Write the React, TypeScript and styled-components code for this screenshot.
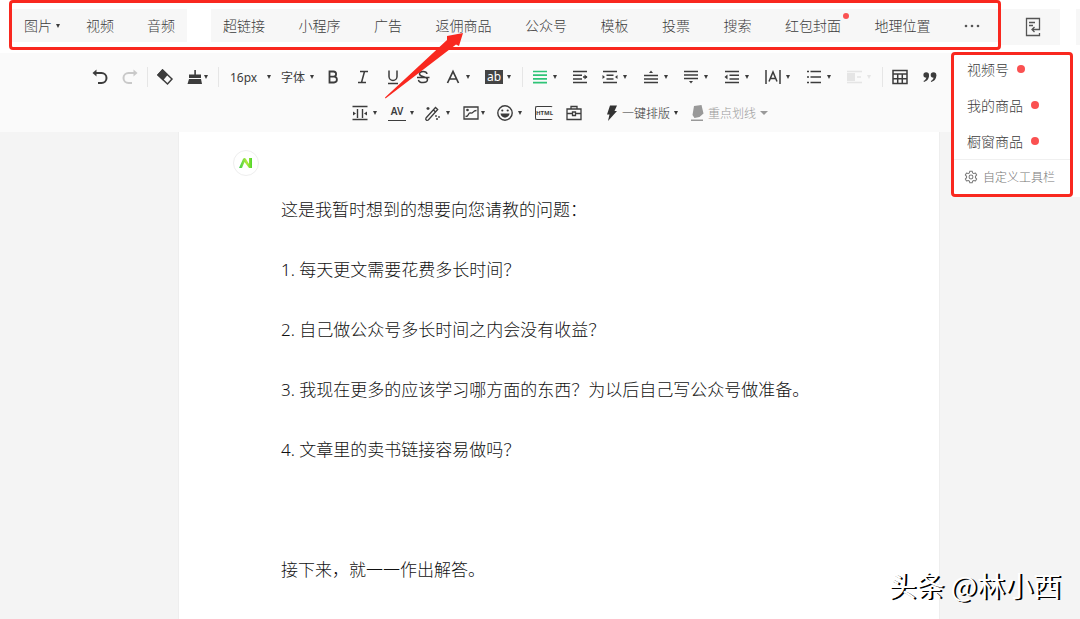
import React from "react";
import styled, { createGlobalStyle, css } from "styled-components";

const Global = createGlobalStyle`
  * { box-sizing: border-box; }
  body {
    margin: 0;
    background: #f4f4f4;
    color: #3c3c3c;
    font-family: "Noto Sans", "Noto Sans CJK SC", sans-serif;
    font-size: 14px;
    font-weight: 300;
  }
  button, select { font: inherit; color: inherit; background: none; border: 0; padding: 0; margin: 0; cursor: pointer; }
  svg { display: block; flex: none; }
`;

const RED = "#f9281f";

const Page = styled.div`
  position: relative;
  min-height: 100vh;
  display: flex;
  flex-direction: column;
`;

const Header = styled.header`
  display: flex;
  background: #fff;
  padding-left: 9px;
  height: 53px;
`;

const Marked = styled.div`
  flex: 1;
  display: flex;
  gap: 24px;
  height: 50px;
  padding: 6px 0 5px;
  border: 3px solid ${RED};
  border-radius: 4px;
`;

const Group = styled.nav<{ $grow?: boolean }>`
  display: flex;
  align-items: center;
  background: #f7f7f7;
  ${(p) =>
    p.$grow
      ? css`flex: 1; justify-content: space-between; padding: 0 18px 0 12px;`
      : css`gap: 33px; padding: 0 12px;`}
`;

const Insert = styled.button<{ $drop?: boolean }>`
  position: relative;
  display: flex;
  align-items: center;
  gap: 4px;
  margin-right: ${(p) => (p.$drop ? -7 : 0)}px;
  white-space: nowrap;
  line-height: 20px;
`;

const Badge = styled.span`
  position: absolute;
  top: -3px;
  right: -8px;
  width: 6px;
  height: 6px;
  border-radius: 50%;
  background: #fa5151;
`;

const Side = styled.div`
  display: flex;
  gap: 16px;
  padding-top: 9px;
`;

const SideButton = styled.button<{ $stub?: boolean }>`
  display: flex;
  align-items: center;
  justify-content: center;
  width: ${(p) => (p.$stub ? 4 : 59)}px;
  height: 36px;
  padding-left: ${(p) => (p.$stub ? 0 : 4)}px;
  background: #f7f7f7;
`;

const Toolbar = styled.div`
  background: #fafafa;
  padding: 6px 0 1px;
`;

const Row = styled.div<{ $indent: number }>`
  display: flex;
  align-items: center;
  height: 36px;
  padding-left: ${(p) => p.$indent}px;
  font-size: 12px;
`;

const Tool = styled.button<{ $w?: number; $gap?: number; $faint?: number }>`
  display: flex;
  align-items: center;
  gap: ${(p) => p.$gap ?? 4}px;
  width: ${(p) => p.$w ?? 30}px;
  height: 30px;
  padding-left: 6px;
  flex: none;
  white-space: nowrap;
  opacity: ${(p) => p.$faint ?? 1};
`;

const TextTool = styled.button<{ $muted?: boolean }>`
  display: flex;
  align-items: center;
  gap: 4px;
  height: 30px;
  padding-left: ${(p) => (p.$muted ? 11 : 14)}px;
  white-space: nowrap;
  color: ${(p) => (p.$muted ? "#999" : "#333")};
`;

const Label = styled.span`
  margin-left: -3px;
`;

const Picker = styled.label<{ $w: number; $pad: number }>`
  display: flex;
  align-items: center;
  justify-content: space-between;
  width: ${(p) => p.$w}px;
  padding: 0 4px 0 ${(p) => p.$pad}px;
  font-weight: 400;
  select { appearance: none; outline: 0; }
`;

const Sep = styled.i`
  width: 1px;
  height: 20px;
  margin: 0 2px;
  background: #e6e6e6;
`;

const CaretMark = styled.i<{ $wide?: boolean }>`
  width: 0;
  height: 0;
  flex: none;
  border: ${(p) => (p.$wide ? 4 : 2)}px solid transparent;
  border-top: 4px solid currentColor;
  border-bottom: 0;
`;

const More = styled.div`
  position: absolute;
  top: 52px;
  right: 0;
  padding-right: 7px;
  background: #fff;
`;

const MoreBox = styled.div`
  width: 122px;
  border: 3px solid ${RED};
  border-radius: 4px;
`;

const MoreList = styled.div`
  display: flex;
  flex-direction: column;
  gap: 8px;
  padding: 0 0 4px 13px;
`;

const MoreItem = styled.button`
  display: flex;
  align-items: center;
  gap: 8px;
  height: 28px;
`;

const Dot = styled.span`
  width: 8px;
  height: 8px;
  border-radius: 50%;
  background: #fa5151;
`;

const Customize = styled.button`
  display: flex;
  align-items: center;
  gap: 5px;
  width: 100%;
  height: 35px;
  padding-left: 10px;
  border-top: 1px solid #f0f0f0;
  font-size: 12px;
  color: #777;
`;

const Paper = styled.main`
  flex: 1;
  margin: 0 140px 0 178px;
  padding: 18px 54px 20px;
  background: #fff;
  border-left: 1px solid #eee;
  border-right: 1px solid #eee;
  color: #111;
`;

const Avatar = styled.div`
  display: flex;
  align-items: center;
  justify-content: center;
  width: 26px;
  height: 26px;
  border: 1px solid #eee;
  border-radius: 50%;
`;

const Article = styled.article`
  padding: 19px 48px 0;
  font-size: 17px;
  line-height: 30px;
  p { margin: 0 0 30px; }
  p:last-child { margin: 90px 0 0; }
`;

const Arrow = styled.svg`
  position: absolute;
  left: 380px;
  top: 28px;
  pointer-events: none;
`;

const Watermark = styled.div`
  position: absolute;
  right: 19px;
  bottom: 14px;
  font-family: "Noto Sans CJK SC", sans-serif;
  font-size: 28px;
  font-weight: 400;
  line-height: 40px;
  color: #fff;
  text-shadow: 2px 1px 0 #000;
  white-space: nowrap;
`;

const Caret = ({ wide }: { wide?: boolean }) => <CaretMark $wide={wide} aria-hidden="true" />;

const Icon = ({ children, size = 18, sw = 1.5 }: { children: React.ReactNode; size?: number; sw?: number }) => (
  <svg width={size} height={size} viewBox="0 0 18 18" fill="none" stroke="currentColor" strokeWidth={sw} aria-hidden="true">
    {children}
  </svg>
);

const solid = { fill: "currentColor", stroke: "none" };

const icons: Record<string, React.ReactNode> = {
  undo: <Icon sw={2}><path d="M4 5h6.500a5 5 0 0 1 0 10H7" /><path {...solid} d="M1.500 5L5.500 1.500v7z" /></Icon>,
  redo: <Icon sw={2}><path d="M14 5H7.500a5 5 0 0 0 0 10H11" /><path {...solid} d="M16.500 5L12.500 1.500v7z" /></Icon>,
  eraser: <Icon><path d="M6.500 2L16 11l-4.500 5L2 7z" /><path {...solid} d="M6.500 1L12 6.500 7 12.500 1 7z" /></Icon>,
  brush: <Icon><path {...solid} d="M8.300 2h1.600v4.500H15V10H3V6.500h5.300zM3 11h12l1 5H1.500z" /></Icon>,
  bold: <Icon sw={1.800}><path d="M5.500 3.500h4a2.600 2.600 0 0 1 0 5.200h-4zM5.500 8.700h4.500a2.900 2.900 0 0 1 0 5.800H5.500z" /></Icon>,
  italic: <Icon><path d="M6 3.500h8M4 14.500h8M10.500 3.500l-3 11" /></Icon>,
  underline: <Icon><path d="M5 2.500v6a4 4 0 0 0 8 0v-6M4 15.500h10" /></Icon>,
  strike: <Icon><path d="M13 6c-.5-3.500-7.500-3.500-7.500 0 0 3.300 8 2.300 8 5.500 0 4-8.500 4-9 .3M3 9.500h12.500" /></Icon>,
  color: <Icon sw={1.700}><path d="M3.500 15L9 3.500 14.500 15M5.500 11h7" /></Icon>,
  align: <Icon sw={1.700}><g stroke="#2fc477"><path d="M2 3.500h14M2 7.200h14M2 10.900h14M2 14.600h14" /></g></Icon>,
  indent: <Icon><path d="M2 3.500h14M2 7.200h9M2 10.900h9M2 14.500h14M16 9h-4" /><path {...solid} d="M16.500 9l-3-2.500v5z" /></Icon>,
  margins: <Icon><path d="M2 3.500h14M5.500 7.200h7M5.500 10.900h7M2 14.500h14" /><path {...solid} d="M4 9L1.500 7v4zM14 9l2.500-2v4z" /></Icon>,
  before: <Icon><path d="M2 7.500h14M2 11h14M2 14.500h14" /><path {...solid} d="M9 2.500L11 5H7z" /></Icon>,
  after: <Icon><path d="M2 3.500h14M2 7h14M2 10.500h14" /><path {...solid} d="M9 15.500l2-2.500H7z" /></Icon>,
  lineheight: <Icon><path d="M2 3.500h14M6.500 7.200H16M6.500 10.900H16M2 14.500h14" /><path {...solid} d="M1.500 9L4.500 6.500v5z" /></Icon>,
  spacing: <Icon><path d="M2 2v14M16 2v14M5 13.500L9 4l4 9.500M6.500 10.500h5" /></Icon>,
  list: <Icon><path d="M5.500 3.500H16M5.500 9H16M5.500 14.500H16M2 3.500h2M2 9h2M2 14.500h2" /></Icon>,
  float: <Icon><path d="M2 3.500h15M2 14.500h15M12 9h4" /><path {...solid} d="M2 5h8v8H2z" /></Icon>,
  table: <Icon><path d="M2 2.500h14v13H2zM2 6h14M2 10.700h14M6.700 6v9.500M11.300 6v9.500" /></Icon>,
  quote: <Icon><g {...solid}><circle cx="5.200" cy="7" r="2.800" /><circle cx="12.500" cy="7" r="2.800" /><path d="M8 7c0 4-2 6-5 7l-.5-1c2-1 3-2.500 3-5zM15.300 7c0 4-2 6-5 7l-.5-1c2-1 3-2.500 3-5z" /></g></Icon>,
  sides: <Icon sw={1.400}><path d="M1.500 2.500h15M1.500 15.500h15M6.500 5v9M11.500 5v9" /><path {...solid} d="M5 9.500L2 7.500v4zM13 9.500l3-2v4z" /></Icon>,
  wand: <Icon sw={1.300}><path d="M2 14L11.500 3.500l2.200 2L4.300 16c-1.500 1-3.300-.5-2.300-2zM9.500 6l2 2M4 3v3M2.500 4.500h3M12 11v2M15 12v2M12 15h2" /></Icon>,
  image: <Icon sw={1.300}><path d="M2 3h14v12H2zM3.500 12.500c4 0 2-4 5-3.500 3 .8 2-2.500 6-2.500" /><circle cx="5.500" cy="6" r=".7" /></Icon>,
  smile: <Icon sw={1.400}><circle cx="9" cy="9" r="7.200" /><path {...solid} d="M4.500 9.500h9c-.5 5.500-8.500 5.500-9 0z" /><circle {...solid} cx="6.300" cy="6.500" r="1.100" /><circle {...solid} cx="11.700" cy="6.500" r="1.100" /></Icon>,
  toolbox: <Icon sw={1.300}><path d="M2 5h14v10.500H2zM6 5V2.500h6V5M2 9.500h5M11 9.500h5M7.500 8h3v3.500h-3z" /></Icon>,
  bolt: <Icon><path {...solid} d="M7 1.500h7L11.500 7H14L5 17l1.500-6.500H4z" /></Icon>,
  marker: <Icon><path {...solid} d="M5 2l7.500-1 2 8.500-4 3.500-5 1-2-3zM2 15.500h12V17H2z" /></Icon>,
  gear: <Icon size={14} sw={1.300}><path d="M7.500 1.500h3l.6 2.300 1.500.8 2.200-.7 1.500 2.500-1.600 1.700v1.800l1.600 1.700-1.500 2.500-2.200-.7-1.500.8-.6 2.300h-3l-.6-2.300-1.500-.8-2.200.7-1.500-2.500 1.600-1.700V8.100L1.700 6.400l1.500-2.500 2.200.7 1.500-.8z" /><circle cx="9" cy="9" r="2.500" /></Icon>,
};

const Ab = styled.span`
  width: 18px;
  height: 14px;
  background: #444;
  color: #fff;
  font-size: 12px;
  font-weight: 400;
  line-height: 13px;
  text-align: center;
`;

const Av = styled.span`
  width: 18px;
  height: 15px;
  border-bottom: 1px solid currentColor;
  font-size: 10px;
  font-weight: 600;
  line-height: 10px;
  text-align: center;
`;

const Html = styled.span`
  width: 18px;
  height: 14px;
  border: 1px solid currentColor;
  border-right-color: transparent;
  border-radius: 2px;
  font: 700 6px/12px "Noto Sans", sans-serif;
  text-align: center;
`;

const inserts = ["超链接", "小程序", "广告", "返佣商品", "公众号", "模板", "投票", "搜索", "红包封面", "地理位置"];

const Plain = ({ name, label, faint }: { name: string; label: string; faint?: number }) => (
  <Tool aria-label={label} $faint={faint}>{icons[name]}</Tool>
);

type DropProps = { name?: string; label: string; w?: number; gap?: number; faint?: number; children?: React.ReactNode };

const Drop = ({ name, label, w = 41, gap, faint, children }: DropProps) => (
  <Tool aria-label={label} $w={w} $gap={gap} $faint={faint}>{name ? icons[name] : children}<Caret /></Tool>
);

export default function App() {
  return (
    <Page>
      <Global />
      <Header>
        <Marked>
          <Group>
            <Insert $drop>图片<Caret /></Insert>
            <Insert>视频</Insert>
            <Insert>音频</Insert>
          </Group>
          <Group $grow>
            {inserts.map((t) => (
              <Insert key={t}>{t}{t === "红包封面" && <Badge />}</Insert>
            ))}
            <Insert aria-label="更多">
              <svg width="16" height="4" fill="#555" aria-hidden="true"><circle cx="2" cy="2" r="1.300" /><circle cx="8" cy="2" r="1.300" /><circle cx="14" cy="2" r="1.300" /></svg>
            </Insert>
          </Group>
        </Marked>
        <Side>
          <SideButton aria-label="导入">
            <svg width="16" height="20" viewBox="0 0 16 20" fill="none" stroke="#555" strokeWidth="1.300" aria-hidden="true">
              <path d="M14.500 9V1.500h-13v17h13V16M4 5.500h6M4 8.500h4M14.500 9v3.500H7M9.500 10L7 12.500 9.500 15" />
            </svg>
          </SideButton>
          <SideButton $stub aria-label="展开" />
        </Side>
      </Header>

      <Toolbar>
        <Row $indent={85}>
          <Plain name="undo" label="撤销" />
          <Plain name="redo" label="重做" faint={0.25} />
          <Sep />
          <Plain name="eraser" label="清除格式" />
          <Drop name="brush" label="格式刷" w={36} gap={0} />
          <Sep />
          <Picker $w={54} $pad={9}>
            <select aria-label="字号" defaultValue="16"><option value="16">16px</option></select>
            <Caret />
          </Picker>
          <Picker $w={43} $pad={6}>
            <select aria-label="字体" defaultValue="f"><option value="f">字体</option></select>
            <Caret />
          </Picker>
          <Plain name="bold" label="加粗" />
          <Plain name="italic" label="斜体" />
          <Plain name="underline" label="下划线" />
          <Plain name="strike" label="删除线" />
          <Drop name="color" label="字体颜色" />
          <Drop label="背景色"><Ab>ab</Ab></Drop>
          <Sep />
          <Drop name="align" label="对齐" w={40} />
          <Plain name="indent" label="首行缩进" />
          <Drop name="margins" label="两端缩进" />
          <Drop name="before" label="段前距" w={40} />
          <Drop name="after" label="段后距" />
          <Drop name="lineheight" label="行间距" />
          <Drop name="spacing" label="字间距" />
          <Drop name="list" label="列表" w={40} />
          <Drop name="float" label="浮动" faint={0.1} />
          <Sep />
          <Plain name="table" label="表格" />
          <Plain name="quote" label="引用" />
        </Row>
        <Row $indent={345}>
          <Drop name="sides" label="页边距" w={37} />
          <Drop label="字符间距" w={36}><Av>AV</Av></Drop>
          <Drop name="wand" label="美化" w={38} />
          <Drop name="image" label="图片样式" w={34} gap={1} />
          <Drop name="smile" label="表情" w={39} />
          <Tool aria-label="源代码"><Html>HTML</Html></Tool>
          <Plain name="toolbox" label="工具箱" />
          <TextTool>{icons.bolt}<Label>一键排版</Label><Caret /></TextTool>
          <TextTool $muted>{icons.marker}<Label>重点划线</Label><Caret wide /></TextTool>
        </Row>
      </Toolbar>

      <Paper>
        <Avatar>
          <svg width="14" height="12" viewBox="0 0 14 12" aria-hidden="true">
            <defs>
              <linearGradient id="leaf" x1="0" x2="1">
                <stop offset="0" stopColor="#3ccf4a" />
                <stop offset="0.6" stopColor="#b4ea3a" />
                <stop offset="1" stopColor="#4fd62c" />
              </linearGradient>
            </defs>
            <path d="M0 11L4 2q1.500-2 3 0l3 5V1h3v10h-3L5.500 5 3 11z" fill="url(#leaf)" />
          </svg>
        </Avatar>
        <Article>
          <p>这是我暂时想到的想要向您请教的问题：</p>
          <p>1. 每天更文需要花费多长时间？</p>
          <p>2. 自己做公众号多长时间之内会没有收益？</p>
          <p>3. 我现在更多的应该学习哪方面的东西？为以后自己写公众号做准备。</p>
          <p>4. 文章里的卖书链接容易做吗？</p>
          <p>接下来，就一一作出解答。</p>
        </Article>
      </Paper>

      <More>
        <MoreBox>
          <MoreList>
            {["视频号", "我的商品", "橱窗商品"].map((t) => (
              <MoreItem key={t}>{t}<Dot /></MoreItem>
            ))}
          </MoreList>
          <Customize>{icons.gear}自定义工具栏</Customize>
        </MoreBox>
      </More>

      <Arrow width="90" height="76" viewBox="0 0 90 76" aria-hidden="true">
        <path d="M83 5L79 18 76 16.500 5.500 70.500 5 69.500 67 12 67 8z" fill={RED} />
      </Arrow>
      <Watermark>头条 @林小西</Watermark>
    </Page>
  );
}
